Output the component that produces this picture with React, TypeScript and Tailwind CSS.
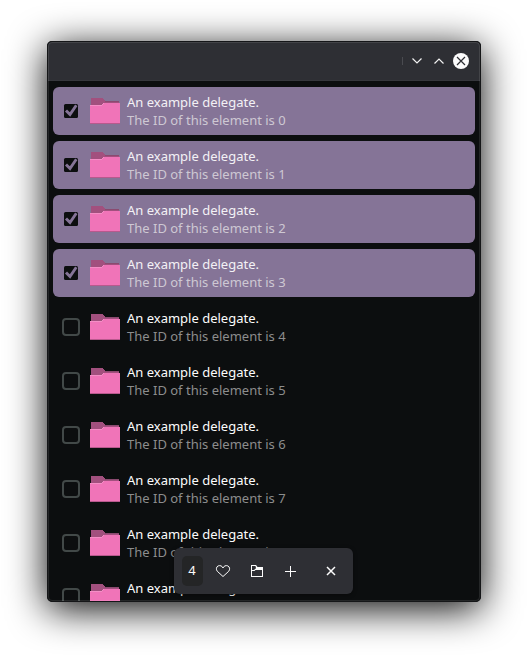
import React from 'react';

function Folder() {
  return (
    <svg width="30" height="26" viewBox="0 0 30 26" shapeRendering="crispEdges" className="shrink-0">
      <path d="M1 0h12l2 3h14v7H1z" fill="#a2507e" />
      <path d="M15 3h14v1H15z" fill="#8b4a70" />
      <path d="M0 7h11l3-2h16v21H0z" fill="#f074b8" />
      <path d="M0 7h11l3-2v1l-3 2H0z" fill="#f48fc6" />
      <path d="M0 25h30v1H0z" fill="#b8598d" />
    </svg>
  );
}

function CheckBox({ checked }: { checked: boolean }) {
  if (!checked) {
    return <span className="h-[18px] w-[18px] shrink-0 rounded-[4px] border-2 border-[#424948]" />;
  }
  return (
    <svg width="18" height="18" viewBox="0 0 18 18" className="shrink-0">
      <rect x="2" y="2" width="14" height="14" rx="1.500" fill="#0c0e0f" />
      <path d="M4 8.500l4 4L14.300 3.300" fill="none" stroke="#857497" strokeWidth="2.900" />
    </svg>
  );
}

function Row({ id }: { id: number }) {
  const checked = id < 4;
  return (
    <li className={`flex h-12 shrink-0 items-center rounded-md pl-[9px] ${checked ? 'bg-[#857497]' : ''}`}>
      <CheckBox checked={checked} />
      <span className="ml-[10px]">
        <Folder />
      </span>
      <div className="ml-[7px] text-[13px] leading-[18px] whitespace-nowrap">
        <div className={checked ? 'text-[#f3f1f5]' : 'text-[#fcfcfc]'}>An example delegate.</div>
        <div className={checked ? 'text-[#cec8d3]' : 'text-[#8c8d8d]'}>The ID of this element is {id}</div>
      </div>
    </li>
  );
}

function TitleBar() {
  return (
    <header className="flex h-10 shrink-0 items-center justify-end border-b border-[#36373c] bg-[#2e2f34] pr-1.5">
      <span className="mr-[6px] h-2 w-px bg-[#4a4b50]" />
      <svg width="66" height="16" viewBox="0 0 66 16" fill="none" strokeWidth="1.200">
        <path d="M3.500 5.500L8 10l4.500-4.500M25.500 10.500L30 6l4.500 4.500" stroke="#f0f0f0" />
        <circle cx="52" cy="8" r="8" fill="#fcfcfc" />
        <path d="M48 4l8 8M56 4l-8 8" stroke="#2e2f34" />
      </svg>
    </header>
  );
}

function ActionBar() {
  return (
    <div className="absolute top-[507px] left-[127px] flex h-[46px] w-[179px] items-center rounded-md bg-[#2e2f34] pl-2 text-[#fcfcfc] shadow-[0_1px_4px_rgba(0,0,0,0.4)]">
      <span className="flex h-[30px] w-[21px] items-center justify-center rounded-[5px] bg-[#242526] pr-px text-[13px]">4</span>
      <svg className="ml-3" width="16" height="16" viewBox="0 0 16 16" fill="none" stroke="currentColor">
        <path d="M8 13.500L2.300 8.300C.8 6.500 1.200 3.700 3.200 2.900C5.200 2.100 7.200 3 8 5C8.800 3 10.800 2.100 12.800 2.900C14.800 3.700 15.200 6.500 13.700 8.300Z" />
      </svg>
      <svg className="ml-[18px]" width="16" height="16" viewBox="0 0 16 16" fill="currentColor">
        <path fillRule="evenodd" d="M2 2h5l1.500 2H14v10H2zM3 3v4h2l2-1.800L6.500 3zM3 8v5h10V7H6.500l-1 1z" />
      </svg>
      <svg className="ml-[18px]" width="16" height="16" viewBox="0 0 16 16" stroke="currentColor">
        <path d="M7.500 3v11M2 8.500h11" />
      </svg>
      <svg className="ml-6" width="16" height="16" viewBox="0 0 16 16" stroke="currentColor" strokeWidth="1.500">
        <path d="M4 4l8 8M12 4l-8 8" />
      </svg>
    </div>
  );
}

export default function App() {
  return (
    <div className="h-[655px] w-[528px] overflow-hidden bg-white pt-[41px] pl-[47px] font-['Noto_Sans',sans-serif]">
      <div className="relative h-[561px] w-[434px] rounded-[5px] shadow-[0_7px_38px_rgba(0,0,0,0.98)]">
        <div className="flex h-full flex-col overflow-hidden rounded-[5px] bg-[#0c0e0f]">
          <TitleBar />
          <ul className="flex min-h-0 flex-1 flex-col gap-1.5 overflow-hidden px-1.5 pt-1.5">
            {[0, 1, 2, 3, 4, 5, 6, 7, 8, 9].map((id) => (
              <Row key={id} id={id} />
            ))}
          </ul>
        </div>
        <div className="pointer-events-none absolute inset-0 rounded-[5px] border border-[#151618]">
          <div className="h-full rounded-[4px] border border-white/10" />
        </div>
        <ActionBar />
      </div>
    </div>
  );
}
